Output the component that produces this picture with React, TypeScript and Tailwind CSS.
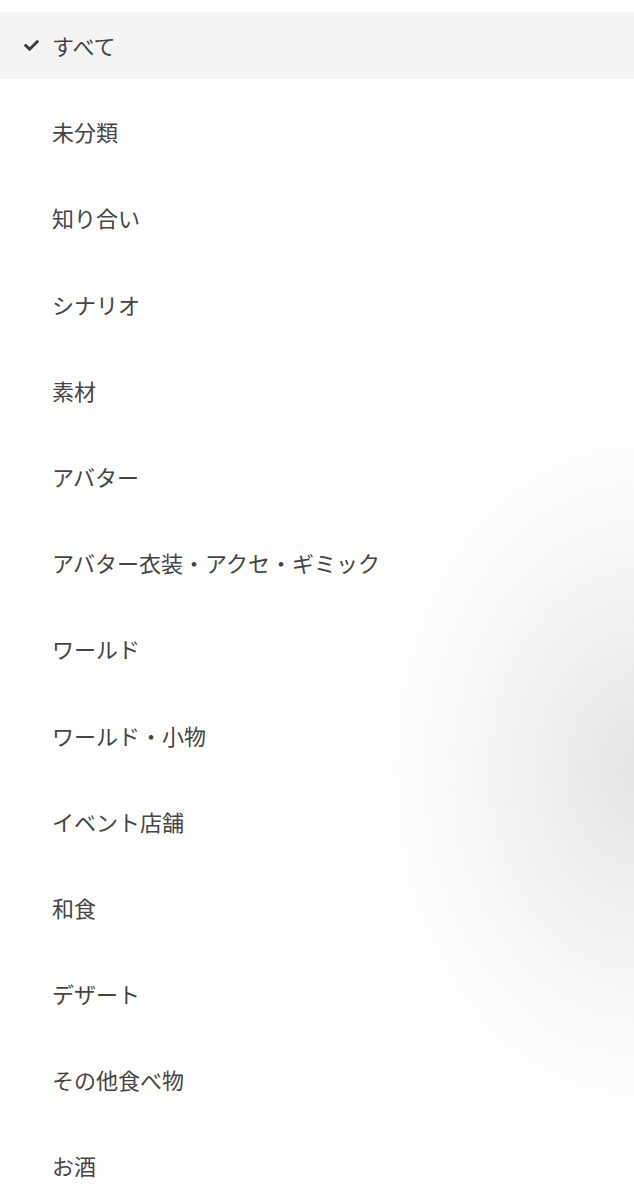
import { FaCheck } from "react-icons/fa";

const items = [
  "すべて",
  "未分類",
  "知り合い",
  "シナリオ",
  "素材",
  "アバター",
  "アバター衣装・アクセ・ギミック",
  "ワールド",
  "ワールド・小物",
  "イベント店舗",
  "和食",
  "デザート",
  "その他食べ物",
  "お酒",
];

export default function App() {
  return (
    <div className="relative w-[634px] h-[1200px] overflow-hidden bg-white" style={{ fontFamily: '"Noto Sans CJK JP", "Noto Sans", sans-serif' }}>
      {/*影 */}
      <div className="absolute left-[340px] top-[370px] w-[600px] h-[800px] rounded-full bg-[radial-gradient(closest-side,#e4e4e4_0%,#f0f0f0_35%,#fafafa_68%,rgba(255,255,255,0)_100%)]" />
      <ul className="relative flex flex-col gap-[19.2px] pt-[12px]">
        {items.map((name, i) => (
          <li
            key={name}
            className={
              "flex items-center h-[67px] pl-[24px] text-[22px] text-[#444]" +
              (i === 0 ? " bg-[#f4f4f4]" : "")
            }
          >
            <span className="w-[28px] flex items-center">
              {i === 0 && <FaCheck className="w-[15px] h-[15px] text-[#3c3c3c]" />}
            </span>
            <span>{name}</span>
          </li>
        ))}
      </ul>
    </div>
  );
}
